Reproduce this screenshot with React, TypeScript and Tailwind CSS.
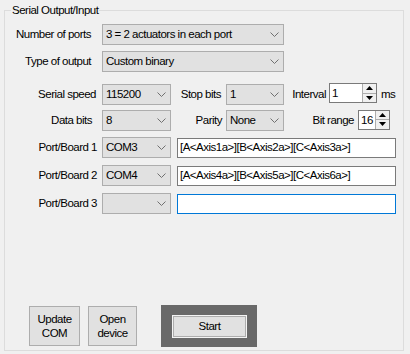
import React from "react"

const font = "font-['Liberation_Sans',Arial,sans-serif] text-[11.5px] tracking-[-0.5px] text-black"

function Chevron() {
    return (
        <svg width="9" height="5" viewBox="0 0 9 5" className="shrink-0">
            <polyline points="0.5,0.5 4.5,4.5 8.5,0.5" fill="none" stroke="#707070" strokeWidth="1" />
        </svg>
    )
}

function Select({ className, value }: { className: string; value: string }) {
    return (
        <div className={`flex items-center h-[21px] border border-[#adadad] bg-[#e1e1e1] pl-[3px] pr-[4px] ${className}`}>
            <span className="flex-1 whitespace-nowrap overflow-hidden">{value}</span>
            <Chevron />
        </div>
    )
}

function Spinner() {
    return (
        <div className="flex flex-col w-[14px] h-full border-l border-[#adadad] bg-[#f0f0f0]">
            <div className="flex-1 flex items-center justify-center border-b border-[#adadad]">
                <svg width="7" height="4" viewBox="0 0 7 4"><polygon points="0,4 3.5,0 7,4" fill="#000" /></svg>
            </div>
            <div className="flex-1 flex items-center justify-center">
                <svg width="7" height="4" viewBox="0 0 7 4"><polygon points="0,0 3.5,4 7,0" fill="#000" /></svg>
            </div>
        </div>
    )
}

function NumBox({ className, value }: { className: string; value: string }) {
    return (
        <div className={`flex items-stretch border border-[#7a7a7a] bg-white ${className}`}>
            <span className="flex-1 pl-[2px] leading-[18px]">{value}</span>
            <Spinner />
        </div>
    )
}

function TextBox({ value, focused }: { value: string; focused?: boolean }) {
    return (
        <div
            className={`flex items-center w-[219px] h-[20px] bg-white pl-[2px] border ${
                focused ? "border-[#0078d7]" : "border-[#7a7a7a]"
            }`}
        >
            {value}
        </div>
    )
}

function PortRow({ label, com, text, focused }: { label: string; com: string; text: string; focused?: boolean }) {
    return (
        <div className="flex items-center h-[21px] mt-[7px]">
            <span className="w-[92px] text-right">{label}</span>
            <Select className="ml-[5px] w-[69px]" value={com} />
            <div className="ml-[6px]">
                <TextBox value={text} focused={focused} />
            </div>
        </div>
    )
}

export default function App() {
    return (
        <div className={`w-[410px] h-[354px] bg-[#f0f0f0] overflow-hidden pt-[10px] pl-[4px] ${font}`}>
            <div className="relative w-[400px] h-[341px] border border-[#dcdcdc]">
                <span className="absolute left-[6px] -top-[8px] px-[1px] bg-[#f0f0f0] leading-[14px]">
                    Serial Output/Input
                </span>

                <div className="flex items-center h-[21px] mt-[13px]">
                    <span className="w-[86px] text-right">Number of ports</span>
                    <Select className="ml-[11px] w-[182px]" value="3 = 2 actuators in each port" />
                </div>
                <div className="flex items-center h-[21px] mt-[6px]">
                    <span className="w-[86px] text-right">Type of output</span>
                    <Select className="ml-[11px] w-[182px]" value="Custom binary" />
                </div>

                <div className="flex items-center h-[21px] mt-[12px]">
                    <span className="w-[91px] text-right">Serial speed</span>
                    <Select className="ml-[6px] w-[69px]" value="115200" />
                    <span className="w-[50px] text-right">Stop bits</span>
                    <Select className="ml-[5px] w-[58px]" value="1" />
                    <span className="w-[42px] text-right">Interval</span>
                    <NumBox className="ml-[3px] w-[48px] h-[20px] mb-[3px]" value="1" />
                    <span className="ml-[4px]">ms</span>
                </div>
                <div className="flex items-center h-[21px] mt-[5px]">
                    <span className="w-[87px] text-right">Data bits</span>
                    <Select className="ml-[10px] w-[69px]" value="8" />
                    <span className="w-[51px] text-right">Parity</span>
                    <Select className="ml-[4px] w-[58px]" value="None" />
                    <span className="w-[70px] text-right">Bit range</span>
                    <NumBox className="ml-[4px] w-[32px] h-[20px] mb-[2px]" value="16" />
                </div>

                <div className="mt-[-1px]">
                    <PortRow label="Port/Board 1" com="COM3" text="[A<Axis1a>][B<Axis2a>][C<Axis3a>]" />
                    <PortRow label="Port/Board 2" com="COM4" text="[A<Axis4a>][B<Axis5a>][C<Axis6a>]" />
                    <PortRow label="Port/Board 3" com="" text="" focused />
                </div>

                <div className="flex items-center mt-[91px] pl-[24px]">
                    <button className="w-[51px] h-[40px] border border-[#adadad] bg-[#e1e1e1] leading-[14px]">
                        Update
                        <br />
                        COM
                    </button>
                    <button className="ml-[8px] w-[49px] h-[40px] border border-[#adadad] bg-[#e1e1e1] leading-[14px]">
                        Open
                        <br />
                        device
                    </button>
                    <div className="ml-[24px] w-[96px] h-[42px] bg-[#696969] pl-[11px] pt-[10px]">
                        <button className="w-[75px] h-[23px] border border-[#f4f4f4] bg-[#e1e1e1] shadow-[inset_0_0_0_1px_#adadad]">
                            Start
                        </button>
                    </div>
                </div>
            </div>
        </div>
    )
}
